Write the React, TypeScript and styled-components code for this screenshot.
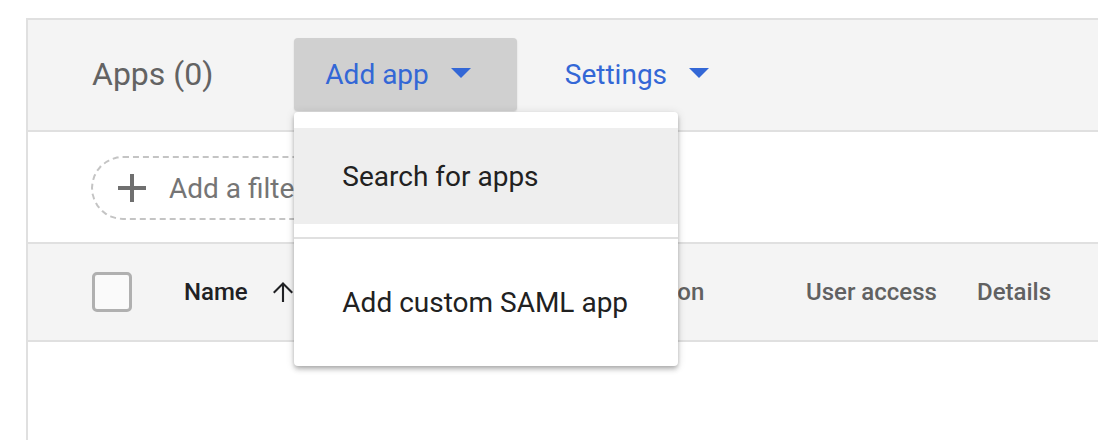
import React from "react";
import styled, { createGlobalStyle } from "styled-components";

const Global = createGlobalStyle`
  html, body { margin: 0; padding: 0; background: #fff; overflow: hidden; }
  body { font-family: Roboto, "Noto Sans", "Liberation Sans", sans-serif; }
`;

const Page = styled.div`
  padding: 18px 0 0 26px;
  height: 440px;
  box-sizing: border-box;
`;

const Panel = styled.div`
  width: 1200px;
  height: 100%;
  border-top: 2px solid #e0e0e0;
  border-left: 2px solid #e0e0e0;
  box-sizing: border-box;
  display: flex;
  flex-direction: column;
`;

const Header = styled.div`
  height: 110px;
  background: #f4f4f4;
  border-bottom: 2px solid #e0e0e0;
  display: flex;
  align-items: flex-start;
  padding-left: 64px;
  flex-shrink: 0;
`;

const Title = styled.div`
  font-size: 32px;
  color: #636363;
  margin-right: 81px;
  line-height: 110px;
  margin-top: -1px;
`;

const MenuAnchor = styled.div`
  position: relative;
  margin-top: 18px;
`;

const ActionButton = styled.button<{ $active?: boolean }>`
  height: 73px;
  box-sizing: border-box;
  border: none;
  border-radius: 4px;
  background: ${(p) => (p.$active ? "#d0d0d0" : "transparent")};
  box-shadow: ${(p) => (p.$active ? "0 1px 2px rgba(0,0,0,0.12)" : "none")};
  padding: 0 46px 0 31px;
  display: flex;
  align-items: center;
  gap: 22px;
  font-family: inherit;
  font-size: 28px;
  color: #3367d6;
  cursor: pointer;
  margin: ${(p) => (p.$active ? "0" : "18px 0 0 17px")};
`;

const Caret = styled.span`
  width: 0;
  height: 0;
  border-left: 10px solid transparent;
  border-right: 10px solid transparent;
  border-top: 10px solid #3367d6;
  margin-top: -3px;
`;

const Menu = styled.div`
  position: absolute;
  top: calc(100% + 1px);
  left: 0;
  width: 384px;
  background: #fff;
  border-radius: 4px;
  padding: 16px 0;
  box-shadow: 0 2px 4px -1px rgba(0, 0, 0, 0.2), 0 4px 5px rgba(0, 0, 0, 0.14),
    0 1px 10px rgba(0, 0, 0, 0.12);
  z-index: 10;
`;

const MenuItem = styled.div<{ $hover?: boolean }>`
  height: 96px;
  display: flex;
  align-items: center;
  padding-left: 48px;
  font-size: 28px;
  color: #212121;
  background: ${(p) => (p.$hover ? "#eeeeee" : "#fff")};
  box-sizing: border-box;
`;

const MenuDivider = styled.div`
  height: 2px;
  background: #e0e0e0;
  margin: 13px 0 15px;
`;

const FilterRow = styled.div`
  height: 110px;
  border-bottom: 2px solid #e0e0e0;
  display: flex;
  align-items: center;
  padding-left: 63px;
  flex-shrink: 0;
  box-sizing: content-box;
`;

const FilterChip = styled.div`
  height: 64px;
  box-sizing: border-box;
  border: 2px dashed #c4c4c4;
  border-radius: 32px;
  display: flex;
  align-items: center;
  padding: 0 26px 0 15px;
  gap: 13px;
  font-size: 28px;
  color: #757575;
  margin-top: 2px;
`;

const TableHead = styled.div`
  height: 96px;
  background: #f4f4f4;
  border-bottom: 2px solid #e0e0e0;
  display: flex;
  align-items: center;
  padding-left: 64px;
  flex-shrink: 0;
  box-sizing: content-box;
`;

const Checkbox = styled.div`
  width: 40px;
  height: 40px;
  box-sizing: border-box;
  border: 3px solid #b0b0b0;
  border-radius: 5px;
  background: #fafafa;
  margin-right: 52px;
  flex-shrink: 0;
`;

const Column = styled.div<{ $w: number; $strong?: boolean }>`
  width: ${(p) => p.$w}px;
  flex-shrink: 0;
  display: flex;
  align-items: center;
  gap: 20px;
  font-size: 24px;
  font-weight: 500;
  color: ${(p) => (p.$strong ? "#202124" : "#616161")};
`;

const Body = styled.div`
  flex: 1;
  background: #fff;
`;

const PlusIcon = () => (
  <svg width="48" height="48" viewBox="0 0 24 24" fill="#6f6f6f">
    <path d="M19 13h-6v6h-2v-6H5v-2h6V5h2v6h6v2z" />
  </svg>
);

const ArrowUp = () => (
  <svg width="30" height="30" viewBox="0 0 24 24" fill="#202124">
    <path d="M4 12l1.2 1.2L11.15 7.25V20h1.7V7.25l5.95 5.95L20 12l-8-8-8 8z" />
  </svg>
);

export default function App() {
  return (
    <>
      <Global />
      <Page>
        <Panel>
          <Header>
            <Title>Apps (0)</Title>
            <MenuAnchor>
              <ActionButton $active>
                Add app <Caret />
              </ActionButton>
              <Menu>
                <MenuItem $hover>Search for apps</MenuItem>
                <MenuDivider />
                <MenuItem>Add custom SAML app</MenuItem>
              </Menu>
            </MenuAnchor>
            <ActionButton>
              Settings <Caret />
            </ActionButton>
          </Header>
          <FilterRow>
            <FilterChip>
              <PlusIcon />
              Add a filter
            </FilterChip>
          </FilterRow>
          <TableHead>
            <Checkbox />
            <Column $w={200} $strong>
              Name <ArrowUp />
            </Column>
            <Column $w={163}>Platform</Column>
            <Column $w={259}>Authentication</Column>
            <Column $w={171}>User access</Column>
            <Column $w={200}>Details</Column>
          </TableHead>
          <Body />
        </Panel>
      </Page>
    </>
  );
}
